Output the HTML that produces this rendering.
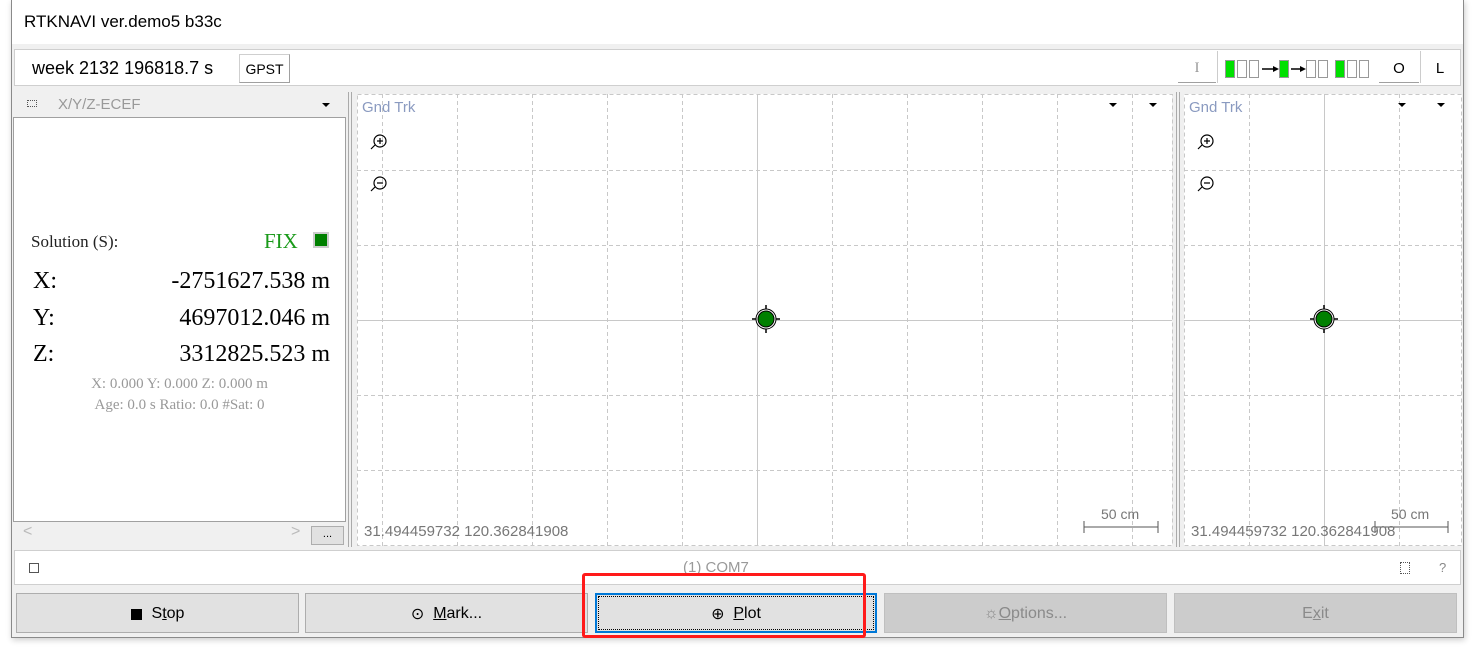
<!DOCTYPE html>
<html><head><meta charset="utf-8"><style>
*{margin:0;padding:0;box-sizing:border-box}
body{width:1475px;height:650px;background:#fff;position:relative;overflow:hidden;font-family:"Liberation Sans",sans-serif}
.a{position:absolute}
.btn{position:absolute;top:593px;height:40px;background:#e1e1e1;border:1px solid #adadad;font-size:16px;color:#000;display:flex;align-items:center;justify-content:center;padding-top:2px}
.dis{background:#cccccc;border-color:#bfbfbf;color:#8a8a8a}
.serif{font-family:"Liberation Serif",serif}
</style></head><body>
<div class="a" style="left:11px;top:0;width:1453px;height:638px;border:1px solid #8a8a8a;border-top:none;background:#f0f0f0;box-shadow:1px 2px 6px rgba(0,0,0,.2)"></div>
<div class="a" style="left:12px;top:0;width:1451px;height:44px;background:#fff"></div>
<div class="a" style="left:24px;top:12px;font-size:17px">RTKNAVI ver.demo5 b33c</div>
<div class="a" style="left:14px;top:49px;width:1447px;height:37px;background:#fff;border:1px solid #cfcfcf"></div>
<div class="a" style="left:32px;top:58px;font-size:18px">week 2132 196818.7 s</div>
<div class="a" style="left:239px;top:54px;width:51px;height:29px;border:1px solid #cfcfcf;border-right-color:#a0a0a0;border-bottom-color:#a0a0a0;font-size:14px;display:flex;align-items:center;justify-content:center">GPST</div>
<div class="a" style="left:1178px;top:54px;width:38px;height:29px;border-bottom:1px solid #a0a0a0;font-size:15px;color:#999;display:flex;align-items:center;justify-content:center;font-family:'Liberation Serif',serif">I</div>
<div class="a" style="left:1217px;top:51px;width:1px;height:32px;background:#ccc"></div>
<svg class="a" style="left:1222px;top:58px" width="156" height="22">
<g fill="#fff" stroke="#999"><rect x="3.5" y="2.5" width="9" height="17"/><rect x="15.5" y="2.5" width="9" height="17"/><rect x="27.5" y="2.5" width="9" height="17"/><rect x="57.5" y="2.5" width="9" height="17"/><rect x="84.5" y="2.5" width="9" height="17"/><rect x="96.5" y="2.5" width="9" height="17"/><rect x="113.5" y="2.5" width="9" height="17"/><rect x="125.5" y="2.5" width="9" height="17"/><rect x="137.5" y="2.5" width="9" height="17"/></g>
<g fill="#00e000"><rect x="4" y="3" width="8" height="16"/><rect x="58" y="3" width="8" height="16"/><rect x="114" y="3" width="8" height="16"/></g>
<g stroke="#000" stroke-width="1.5"><line x1="40" y1="11" x2="52" y2="11"/><line x1="69" y1="11" x2="80" y2="11"/></g>
<polygon points="57,11 51,8 51,14" fill="#000"/><polygon points="84,11 78,8 78,14" fill="#000"/>
</svg>
<div class="a" style="left:1379px;top:54px;width:40px;height:29px;border-bottom:1px solid #a0a0a0;font-size:15px;display:flex;align-items:center;justify-content:center">O</div>
<div class="a" style="left:1420px;top:51px;width:1px;height:32px;background:#ccc"></div>
<div class="a" style="left:1421px;top:54px;width:38px;height:29px;font-size:15px;display:flex;align-items:center;justify-content:center">L</div>
<div class="a" style="left:27px;top:100px;width:10px;height:7px;border:1px dotted #555"></div>
<div class="a" style="left:58px;top:96px;font-size:15px;color:#999">X/Y/Z-ECEF</div>
<div class="a" style="left:322px;top:103px;width:0;height:0;border-left:4px solid transparent;border-right:4px solid transparent;border-top:4px solid #000"></div>
<div class="a" style="left:13px;top:117px;width:333px;height:405px;background:#fff;border:1px solid #a0a0a0"></div>
<div class="a serif" style="left:31px;top:232px;font-size:17px;color:#222">Solution (S):</div>
<div class="a serif" style="left:264px;top:229px;font-size:21px;color:#1a9a1a">FIX</div>
<div class="a" style="left:313px;top:232px;width:16px;height:16px;background:#008000;border:2px solid #ccc"></div>
<div class="a serif" style="left:33px;top:268px;font-size:24px">X:</div>
<div class="a serif" style="left:33px;top:305px;font-size:24px">Y:</div>
<div class="a serif" style="left:33px;top:341px;font-size:24px">Z:</div>
<div class="a serif" style="right:1145px;top:268px;font-size:24px">-2751627.538 m</div>
<div class="a serif" style="right:1145px;top:305px;font-size:24px">4697012.046 m</div>
<div class="a serif" style="right:1145px;top:341px;font-size:24px">3312825.523 m</div>
<div class="a serif" style="left:13px;width:333px;text-align:center;top:376px;font-size:15px;color:#999">X: 0.000 Y: 0.000 Z: 0.000 m</div>
<div class="a serif" style="left:13px;width:333px;text-align:center;top:397px;font-size:15px;color:#999">Age: 0.0 s Ratio: 0.0 #Sat: 0</div>
<div class="a" style="left:13px;top:523px;width:297px;height:22px;background:#f0f0f0;color:#bbb;font-size:16px"><span class="a" style="left:10px;top:0">&lt;</span><span class="a" style="left:278px;top:0">&gt;</span></div>
<div class="a" style="left:311px;top:526px;width:33px;height:19px;background:#e1e1e1;border:1px solid #adadad;font-size:11px;text-align:center;line-height:14px">...</div>
<div class="a" style="left:348px;top:92px;width:1px;height:455px;background:#aaa"></div>
<div class="a" style="left:351px;top:92px;width:1px;height:455px;background:#aaa"></div>
<div class="a" style="left:1176px;top:92px;width:1px;height:455px;background:#aaa"></div>
<div class="a" style="left:1179px;top:92px;width:1px;height:455px;background:#aaa"></div>
<svg class="a" style="left:0;top:0" width="1475" height="650">
<rect x="357" y="94" width="815" height="452" fill="#fff"/>
<rect x="1184" y="94" width="278" height="452" fill="#fff"/>
<g stroke="#c8c8c8" stroke-dasharray="4,3" fill="none">
<rect x="357.5" y="94.5" width="815" height="451"/>
<rect x="1184.5" y="94.5" width="277" height="451"/>
<path d="M382.5 94V546M457.5 94V546M532.5 94V546M607.5 94V546M682.5 94V546M832.5 94V546M907.5 94V546M982.5 94V546M1057.5 94V546M1132.5 94V546M1249.5 94V546M1399.5 94V546"/>
<path d="M357 170.5H1172M357 245.5H1172M357 395.5H1172M357 470.5H1172M1184 170.5H1462M1184 245.5H1462M1184 395.5H1462M1184 470.5H1462"/>
</g>
<g stroke="#c8c8c8"><path d="M757.5 94V546M357 320.5H1172M1324.5 94V546M1184 320.5H1462"/></g>
<g><circle cx="766" cy="319" r="10" fill="#fff" stroke="#000"/><circle cx="766" cy="319" r="8" fill="#008000" stroke="#000"/><path d="M766 305V309M766 329V333M752 319H756M776 319H780" stroke="#000" stroke-width="1.5"/></g>
<g><circle cx="1324" cy="319" r="10" fill="#fff" stroke="#000"/><circle cx="1324" cy="319" r="8" fill="#008000" stroke="#000"/><path d="M1324 305V309M1324 329V333M1310 319H1314M1334 319H1338" stroke="#000" stroke-width="1.5"/></g>
<g stroke="#000" fill="none" stroke-width="1.2">
<circle cx="380" cy="141" r="6"/><path d="M377 141H383M380 138V144M375 145L371 149"/>
<circle cx="380" cy="183" r="6"/><path d="M377 183H383M375 187L371 191"/>
<circle cx="1207" cy="141" r="6"/><path d="M1204 141H1210M1207 138V144M1202 145L1198 149"/>
<circle cx="1207" cy="183" r="6"/><path d="M1204 183H1210M1202 187L1198 191"/>
</g>
<g fill="#000"><path d="M1109 103h8l-4 4z"/><path d="M1149 103h8l-4 4z"/><path d="M1398 103h8l-4 4z"/><path d="M1437 103h8l-4 4z"/></g>
<g stroke="#555"><path d="M1084 521V533M1158 521V533M1084 527H1158M1375 521V533M1448 521V533M1375 527H1448"/></g>
<g font-family="Liberation Sans,sans-serif" font-size="15" fill="#8a9ac0"><text x="362" y="112">Gnd Trk</text><text x="1189" y="112">Gnd Trk</text></g>
<g font-family="Liberation Sans,sans-serif" font-size="15" fill="#777"><text x="364" y="536">31.494459732 120.362841908</text><text x="1191" y="536">31.494459732 120.362841908</text><text x="1101" y="519" font-size="14">50 cm</text><text x="1391" y="519" font-size="14">50 cm</text></g>
</svg>
<div class="a" style="left:14px;top:550px;width:1447px;height:35px;background:#fff;border:1px solid #cfcfcf"></div>
<div class="a" style="left:29px;top:563px;width:10px;height:10px;border:1px solid #555"></div>
<div class="a" style="left:683px;top:559px;font-size:15px;color:#999">(1) COM7</div>
<div class="a" style="left:1400px;top:562px;width:10px;height:12px;border:1px dotted #555"></div>
<div class="a" style="left:1439px;top:560px;font-size:13px;color:#888">?</div>
<div class="btn" style="left:16px;width:283px"><span style="display:inline-block;width:11px;height:11px;background:#000;margin-right:10px"></span>S<u>t</u>op</div>
<div class="btn" style="left:305px;width:283px">⊙&nbsp;&nbsp;<u>M</u>ark...</div>
<div class="btn" style="left:595px;width:282px;border:2px solid #0078d7;outline:1px dotted #000;outline-offset:-4px">⊕&nbsp;&nbsp;<u>P</u>lot</div>
<div class="btn dis" style="left:884px;width:283px">☼ <u>O</u>ptions...</div>
<div class="btn dis" style="left:1174px;width:283px">E<u>x</u>it</div>
<div class="a" style="left:582px;top:573px;width:284px;height:65px;border:3px solid #ff1a1a;border-radius:3px"></div>
</body></html>
